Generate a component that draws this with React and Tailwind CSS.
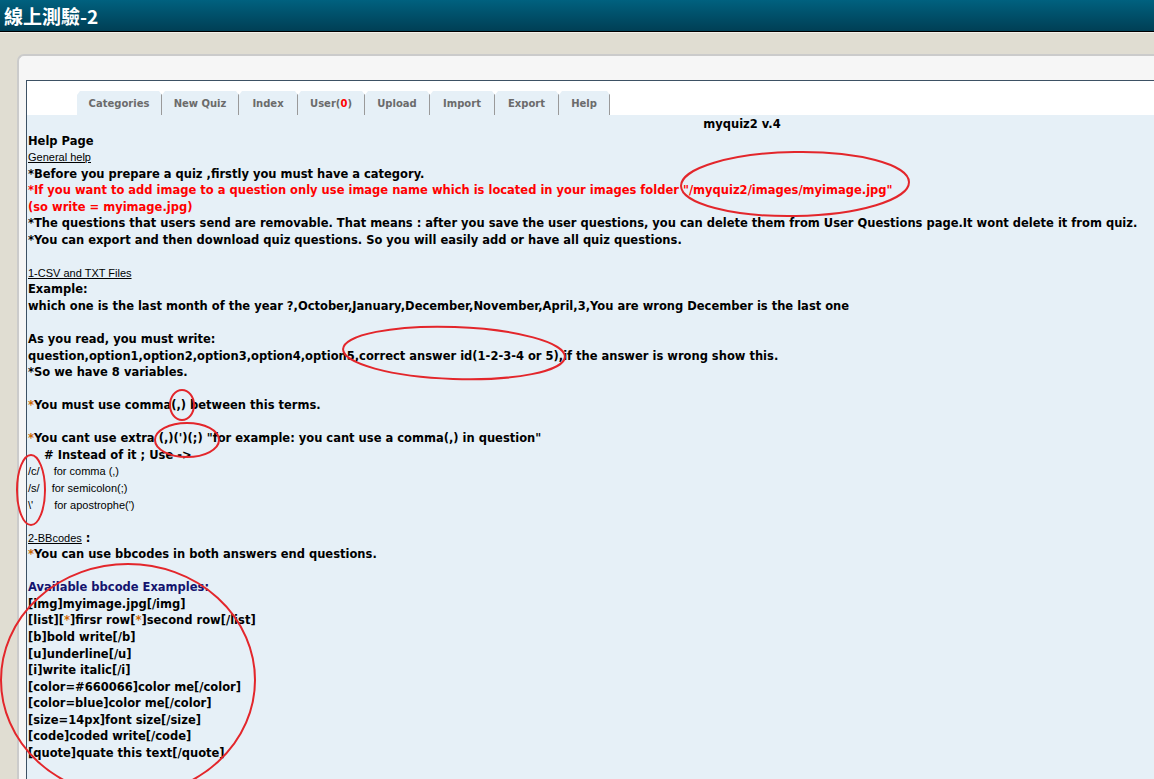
import React from "react";

const tabs = [
  { label: "Categories", w: "w-[85px]" },
  { label: "New Quiz", w: "w-[77px]" },
  { label: "Index", w: "w-[59px]" },
  { label: "User", w: "w-[67px]", count: "0" },
  { label: "Upload", w: "w-[65px]" },
  { label: "Import", w: "w-[65px]" },
  { label: "Export", w: "w-[64px]" },
  { label: "Help", w: "w-[51px]" },
];

const bbcodes = [
  "[img]myimage.jpg[/img]",
  null,
  "[b]bold write[/b]",
  "[u]underline[/u]",
  "[i]write italic[/i]",
  "[color=#660066]color me[/color]",
  "[color=blue]color me[/color]",
  "[size=14px]font size[/size]",
  "[code]coded write[/code]",
  "[quote]quate this text[/quote]",
];

function Star() {
  return <span className="text-[#cc6600]">*</span>;
}

function Link({ children }) {
  return <span className="font-['Liberation_Sans',Arial,sans-serif] font-normal text-[11px] underline">{children}</span>;
}

function Plain({ children }) {
  return <span className="font-['Liberation_Sans',Arial,sans-serif] font-normal text-[11px]">{children}</span>;
}

function Marks() {
  return (
    <svg className="absolute left-0 top-0 pointer-events-none" width="1154" height="779" viewBox="0 0 1154 779">
      <g fill="none" stroke="#e3262b" strokeWidth="2">
        <ellipse cx="795" cy="184" rx="114" ry="32" transform="rotate(-1 795 184)" />
        <ellipse cx="454" cy="353" rx="111" ry="26" transform="rotate(2 454 353)" />
        <ellipse cx="182" cy="405" rx="12" ry="15" />
        <ellipse cx="187" cy="440" rx="32" ry="17" />
        <ellipse cx="31" cy="490" rx="14" ry="35" />
        <ellipse cx="128" cy="680" rx="127" ry="116" />
      </g>
    </svg>
  );
}

export default function App() {
  return (
    <div className="relative w-[1154px] h-[779px] overflow-hidden bg-[#e0ddd2]">
      <div className="h-[31px] bg-gradient-to-b from-[#00617f] to-[#003f55] pl-[4px] flex items-center">
        <span className="text-white font-bold text-[19px] leading-none font-['Noto_Sans_CJK_TC','Noto_Sans',sans-serif]">線上測驗-2</span>
      </div>
      <div className="h-[2px] bg-black border-b border-[#f2f0ea]" />
      <div className="pl-[17px] pt-[21px]">
        <div className="rounded-tl-[7px] border-t-2 border-l-2 border-[#cbcbcb] bg-[#f6f6f6] pl-[7px] pt-[24px]">
          <div className="w-[1430px] border-t border-l border-[#3d5164] bg-white">
            <div className="flex pt-[10px] pl-[50px] font-['DejaVu_Sans',Verdana,sans-serif] font-bold text-[10px] text-[#6b6b6b]">
              {tabs.map((t) => (
                <div
                  key={t.label}
                  className={`${t.w} h-[24px] bg-[#e6f0f7] border-r border-[#9a9a9a] flex items-center justify-center [clip-path:polygon(3px_0,calc(100%-3px)_0,100%_4px,100%_100%,0_100%,0_4px)]`}
                >
                  {t.label}
                  {t.count && (
                    <>
                      (<span className="text-[#ff0000]">{t.count}</span>)
                    </>
                  )}
                </div>
              ))}
            </div>
            <div className="bg-[#e6f0f7] pl-[1px] pt-[1px] pb-[40px] font-['DejaVu_Sans',Verdana,sans-serif] font-bold text-[11.5px] leading-[16.55px] text-black">
              <div className="text-center">myquiz2 v.4</div>
              <div>Help Page</div>
              <div><Link>General help</Link></div>
              <div>*Before you prepare a quiz ,firstly you must have a category.</div>
              <div className="text-[#ff0000]">*If you want to add image to a question only use image name which is located in your images folder "/myquiz2/images/myimage.jpg"</div>
              <div className="text-[#ff0000]">(so write = myimage.jpg)</div>
              <div>*The questions that users send are removable. That means : after you save the user questions, you can delete them from User Questions page.It wont delete it from quiz.</div>
              <div>*You can export and then download quiz questions. So you will easily add or have all quiz questions.</div>
              <div className="h-[16.55px]" />
              <div><Link>1-CSV and TXT Files</Link></div>
              <div>Example:</div>
              <div>which one is the last month of the year ?,October,January,December,November,April,3,You are wrong December is the last one</div>
              <div className="h-[16.55px]" />
              <div>As you read, you must write:</div>
              <div>question,option1,option2,option3,option4,option5,correct answer id(1-2-3-4 or 5),if the answer is wrong show this.</div>
              <div>*So we have 8 variables.</div>
              <div className="h-[16.55px]" />
              <div><Star />You must use comma(,) between this terms.</div>
              <div className="h-[16.55px]" />
              <div><Star />You cant use extra (,)(')(;) "for example: you cant use a comma(,) in question"</div>
              <div className="pl-[16px]"># Instead of it ; Use -&gt;</div>
              <div className="flex"><Plain>/c/</Plain><span className="w-[14px]" /><Plain>for comma (,)</Plain></div>
              <div className="flex"><Plain>/s/</Plain><span className="w-[12px]" /><Plain>for semicolon(;)</Plain></div>
              <div className="flex"><Plain>\'</Plain><span className="w-[21px]" /><Plain>for apostrophe(')</Plain></div>
              <div className="h-[16.55px]" />
              <div><Link>2-BBcodes</Link> :</div>
              <div><Star />You can use bbcodes in both answers end questions.</div>
              <div className="h-[16.55px]" />
              <div className="text-[#14146e]">Available bbcode Examples:</div>
              {bbcodes.map((b, i) =>
                b ? (
                  <div key={i}>{b}</div>
                ) : (
                  <div key={i}>
                    [list][<Star />]firsr row[<Star />]second row[/list]
                  </div>
                )
              )}
            </div>
          </div>
        </div>
      </div>
      <Marks />
    </div>
  );
}
